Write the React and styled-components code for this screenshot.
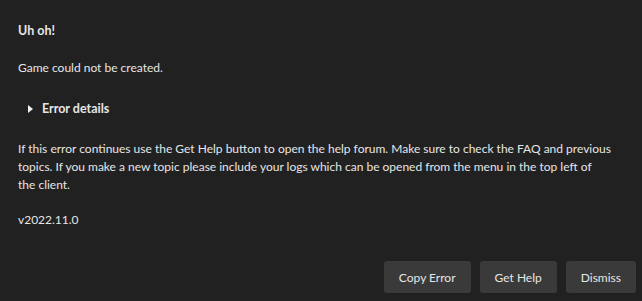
import React from 'react';
import styled, { createGlobalStyle } from 'styled-components';

const GlobalStyle = createGlobalStyle`
  html, body {
    margin: 0;
    padding: 0;
    background: #212121;
  }
  body {
    font-family: Lato, "Noto Sans", sans-serif;
    font-size: 12px;
    color: #e6e6e6;
  }
`;

const Dialog = styled.div`
  width: 642px;
  height: 301px;
  box-sizing: border-box;
  padding: 22px 6px 8px 18px;
  display: flex;
  flex-direction: column;
  background: #212121;
`;

const Line = styled.div`
  line-height: 18px;
  margin-top: ${(p) => p.$gap || 0}px;
  font-weight: ${(p) => (p.$bold ? 700 : 400)};
  font-size: ${(p) => (p.$bold ? 12.5 : 12)}px;
  padding-right: 12px;
`;

const Details = styled.div`
  margin-top: 23px;
  display: flex;
  align-items: center;
  gap: 9px;
  padding-left: 10px;
  line-height: 18px;
  font-size: 12.5px;
  font-weight: 700;
`;

const Triangle = styled.span`
  width: 0;
  height: 0;
  border-top: 4px solid transparent;
  border-bottom: 4px solid transparent;
  border-left: 5px solid #f0f0f0;
`;

const Actions = styled.div`
  margin-top: auto;
  display: flex;
  justify-content: flex-end;
  gap: 9px;
`;

const Button = styled.button`
  height: 32px;
  padding: 0 15px;
  border: none;
  border-radius: 3px;
  background: #3a3a3a;
  color: #e6e6e6;
  font-family: inherit;
  font-size: 12px;
`;

export default function App() {
  return (
    <>
      <GlobalStyle />
      <Dialog>
        <Line $bold>Uh oh!</Line>
        <Line $gap={19}>Game could not be created.</Line>
        <Details>
          <Triangle />
          Error details
        </Details>
        <Line $gap={22}>
          If this error continues use the Get Help button to open the help forum. Make sure to check the FAQ and previous
          topics. If you make a new topic please include your logs which can be opened from the menu in the top left of
          <br />
          the client.
        </Line>
        <Line $gap={17}>v2022.11.0</Line>
        <Actions>
          <Button>Copy Error</Button>
          <Button>Get Help</Button>
          <Button>Dismiss</Button>
        </Actions>
      </Dialog>
    </>
  );
}
